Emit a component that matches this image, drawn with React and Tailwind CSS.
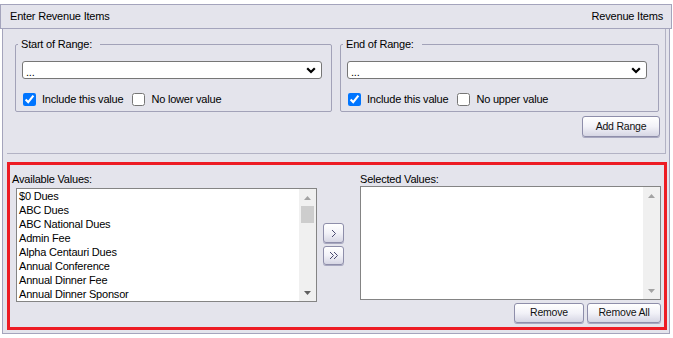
import React from 'react';

const available = [
  '$0 Dues',
  'ABC Dues',
  'ABC National Dues',
  'Admin Fee',
  'Alpha Centauri Dues',
  'Annual Conference',
  'Annual Dinner Fee',
  'Annual Dinner Sponsor',
];

const btn =
  'flex items-center justify-center border border-[#8e8eaa] rounded-[3px] bg-gradient-to-b from-white via-[#f2f2f8] to-[#d6d6e4] shadow-[0_1px_0_#a8a8c0] text-[10.5px] text-[#111]';

const Tri = ({ up, color }) => (
  <svg width="7" height="4" viewBox="0 0 7 4">
    <polygon points={up ? '0,4 7,4 3.5,0' : '0,0 7,0 3.5,4'} fill={color} />
  </svg>
);

const ListBox = ({ items, thumb, className }) => (
  <div className={`flex w-[301px] h-[114px] border border-[#848484] bg-white ${className}`}>
    <div className="flex-1 pl-[2px] overflow-hidden">
      {items.map((it) => (
        <div key={it} className="h-[14px] leading-[14px] whitespace-nowrap">
          {it}
        </div>
      ))}
    </div>
    <div className="w-[17px] bg-[#f0f0f0] flex flex-col">
      <div className="h-[17px] flex items-center justify-center">
        <Tri up color="#a3a3a3" />
      </div>
      <div className="flex-1 px-[2px]">
        {thumb && <div className="h-[17px] bg-[#cdcdcd]" />}
      </div>
      <div className="h-[17px] flex items-center justify-center">
        <Tri color={thumb ? '#606060' : '#a3a3a3'} />
      </div>
    </div>
  </div>
);

const RangeBox = ({ title, other }) => (
  <fieldset className="border border-[#a2a2b8] rounded-[2px] pl-[2px] pb-[4px] h-[74px]">
    <legend className="pl-[3px] pr-[8px] leading-[13px]">{title}</legend>
    <div className="relative ml-[4px] mt-[10px] w-[300px] h-[18px] border border-[#767676] rounded-[3px] bg-white flex items-center pl-[3px]">
      <span className="leading-[10px] pt-[3px]">...</span>
      <svg className="absolute right-[5px] top-[5px]" width="10" height="7" viewBox="0 0 10 7">
        <path d="M1.2 1.2 L5 5 L8.8 1.2" fill="none" stroke="#000" strokeWidth="2.2" />
      </svg>
    </div>
    <div className="ml-[5px] mt-[14px] flex items-center h-[13px]">
      <input type="checkbox" defaultChecked className="w-[13px] h-[13px] accent-[#0075ff]" />
      <span className="ml-[6px]">Include this value</span>
      <input type="checkbox" className="ml-[9px] w-[13px] h-[13px]" />
      <span className="ml-[6px]">{other}</span>
    </div>
  </fieldset>
);

export default function App() {
  return (
    <div className="w-[673px] h-[338px] bg-white pt-[4px] font-['Liberation_Sans',Arial,sans-serif] text-[11px] text-black tracking-[-0.2px]">
      <div className="w-[672px] h-[25px] border border-[#a4a4bc] bg-[#e4e4ec] flex items-center justify-between pl-[9px] pr-[8px]">
        <span>Enter Revenue Items</span>
        <span>Revenue Items</span>
      </div>
      <div className="ml-[2px] w-[668px] h-[305px] border-x border-b border-[#a4a4bc] bg-[#e4e4ec]">
        <div className="ml-[4px] w-[659px] h-[125px] border-r border-b border-[#b2b2c4] pl-[8px] pt-[9px]">
          <div className="flex gap-[8px]">
            <div className="w-[317px]">
              <RangeBox title="Start of Range:" other="No lower value" />
            </div>
            <div className="w-[319px]">
              <RangeBox title="End of Range:" other="No upper value" />
            </div>
          </div>
          <div className="flex justify-end mr-[5px] mt-[4px]">
            <button className={`${btn} w-[78px] h-[21px]`}>Add Range</button>
          </div>
        </div>
        <div className="ml-[4px] mt-[8px] w-[660px] h-[168px] border-[3px] border-[#ed1c24] flex pt-[8px] pl-[2px] pr-[3px]">
          <div className="flex flex-col">
            <div className="leading-[13px]">Available Values:</div>
            <ListBox items={available} thumb className="ml-[4px] mt-[2px]" />
          </div>
          <div className="ml-[6px] mt-[50px] flex flex-col gap-[3px]">
            <button className={`${btn} w-[21px] h-[20px]`}>
              <svg width="6" height="9" viewBox="0 0 6 9">
                <path d="M1 1 L4.5 4.5 L1 8" fill="none" stroke="#4a4a70" strokeWidth="1" />
              </svg>
            </button>
            <button className={`${btn} w-[21px] h-[19px]`}>
              <svg width="10" height="9" viewBox="0 0 10 9">
                <path d="M1 1 L4.5 4.5 L1 8 M5 1 L8.5 4.5 L5 8" fill="none" stroke="#4a4a70" strokeWidth="1" />
              </svg>
            </button>
          </div>
          <div className="ml-[16px] flex flex-col">
            <div className="leading-[13px]">Selected Values:</div>
            <ListBox items={[]} />
            <div className="mt-[3px] flex justify-end gap-[3px]">
              <button className={`${btn} w-[70px] h-[20px]`}>Remove</button>
              <button className={`${btn} w-[74px] h-[20px]`}>Remove All</button>
            </div>
          </div>
        </div>
      </div>
    </div>
  );
}
